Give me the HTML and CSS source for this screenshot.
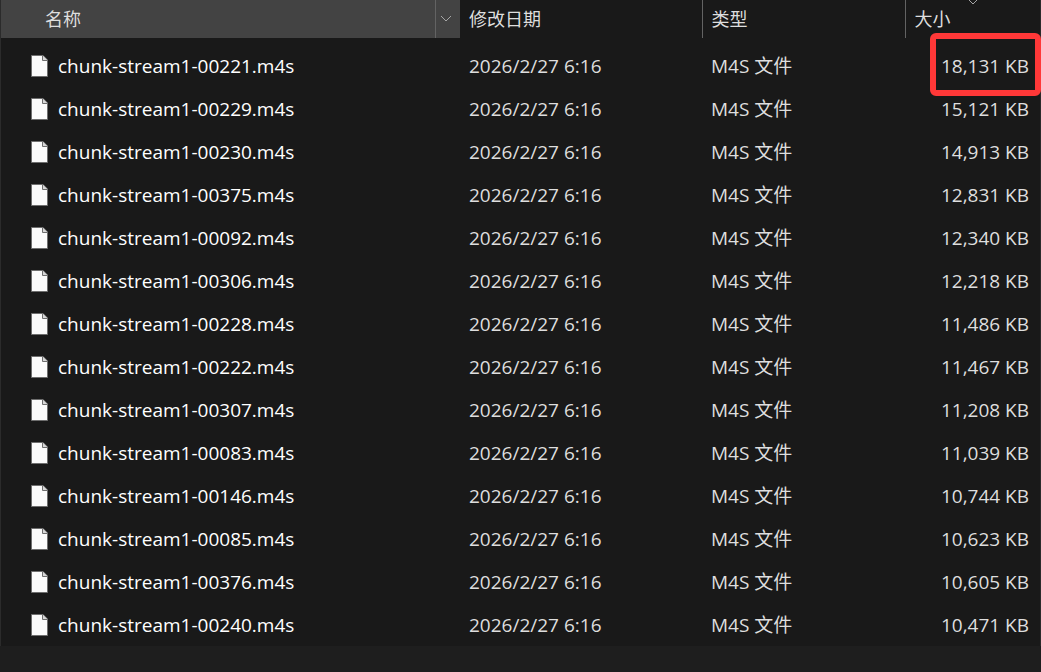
FILE: index.html
```html
<!DOCTYPE html>
<html lang="zh-CN">
<head>
    <meta charset="UTF-8">
    <meta name="viewport" content="width=device-width, initial-scale=1.0">
    <title>chunk-stream1</title>
    <link rel="stylesheet" href="styles.css">
</head>
<body>
    <!-- Shared file icon -->
    <svg class="symbols" aria-hidden="true">
        <symbol id="file-icon" viewBox="0 0 17 22">
            <path d="M0.5 0.5H12L16.5 5V21.5H0.5Z" fill="#fbfbfb" stroke="#6e6e6e"/>
            <path d="M11.5 0.5V5.5H16.5" fill="#d8d8d8" stroke="#6e6e6e"/>
        </symbol>
    </svg>

    <main class="file-list">
        <table class="file-table">
            <colgroup>
                <col class="col-name">
                <col class="col-date">
                <col class="col-type">
                <col class="col-size">
            </colgroup>
            <thead>
                <tr>
                    <th class="name-head" scope="col">
                        <div class="head-cell">
                            <button class="sort-button" type="button">名称</button>
                            <button class="filter-button" type="button" aria-label="筛选">
                                <svg width="12" height="8" viewBox="0 0 12 8"><path d="M1 1L6 6L11 1" fill="none" stroke="#a6a6a6"/></svg>
                            </button>
                        </div>
                    </th>
                    <th scope="col"><button class="sort-button" type="button">修改日期</button></th>
                    <th class="divided" scope="col"><button class="sort-button" type="button">类型</button></th>
                    <th class="divided sorted" scope="col" aria-sort="descending">
                        <button class="sort-button" type="button">大小</button>
                        <svg class="sort-arrow" width="12" height="6" viewBox="0 0 12 6"><path d="M1.5 -0.5L6 4L10.5 -0.5" fill="none" stroke="#a6a6a6"/></svg>
                    </th>
                </tr>
            </thead>
            <tbody id="files"></tbody>
        </table>
    </main>

    <script src="script.js"></script>
</body>
</html>
```
FILE: styles.css
```css
/* Basic reset */
* {
    margin: 0;
    padding: 0;
    box-sizing: border-box;
}

body {
    background-color: #1e1e1e;
    color: #dedede;
    font-family: "Open Sans", "Noto Sans CJK SC", sans-serif;
    font-size: 18px;
    line-height: 24px;
}

.symbols {
    display: none;
}

.file-list {
    background-color: #191919;
    border-left: 1px solid #2b2b2b;
    border-right: 1px solid #2b2b2b;
}

.file-table {
    width: 100%;
    table-layout: fixed;
    border-collapse: collapse;
}

.col-name {
    width: 459px;
}

.col-date {
    width: 242px;
}

.col-type {
    width: 203px;
}

/* Column headers */
th {
    height: 38px;
    font-weight: normal;
    text-align: left;
}

.name-head {
    background-color: #434343;
}

.divided {
    border-left: 1px solid #636363;
}

.head-cell {
    display: flex;
    height: 38px;
}

.sort-button {
    width: 100%;
    height: 38px;
    padding-left: 9px;
    border: none;
    background: none;
    color: inherit;
    font: inherit;
    text-align: left;
}

.name-head .sort-button {
    flex: 1;
    padding-left: 44px;
}

.filter-button {
    display: flex;
    align-items: center;
    width: 25px;
    padding-left: 4px;
    border: none;
    border-left: 1px solid #636363;
    background: none;
}

.sorted {
    position: relative;
}

.sort-arrow {
    position: absolute;
    top: 0;
    left: 50%;
    transform: translateX(-50%);
}

/* File rows */
tbody::before {
    content: "";
    display: block;
    height: 6px;
}

td {
    height: 43px;
    padding-left: 9px;
    font-size: 19px;
    vertical-align: middle;
    white-space: nowrap;
}

.file-name {
    display: flex;
    align-items: center;
    gap: 10px;
    padding-left: 21px;
    color: #ffffff;
}

.file-icon {
    width: 17px;
    height: 22px;
}

.size {
    position: relative;
    padding-right: 11px;
    text-align: right;
}

/* Red frame around the largest file */
.highlight {
    position: absolute;
    top: -11px;
    right: -1px;
    width: 111px;
    height: 63px;
    border: 6px solid #ff3838;
    border-radius: 6px;
}
```
FILE: script.js
```js
var files = [
    ["00221", "18,131"],
    ["00229", "15,121"],
    ["00230", "14,913"],
    ["00375", "12,831"],
    ["00092", "12,340"],
    ["00306", "12,218"],
    ["00228", "11,486"],
    ["00222", "11,467"],
    ["00307", "11,208"],
    ["00083", "11,039"],
    ["00146", "10,744"],
    ["00085", "10,623"],
    ["00376", "10,605"],
    ["00240", "10,471"]
];

// Build one row per file, the first one gets the frame
document.getElementById("files").innerHTML = files.map(function (file, i) {
    return '<tr>' +
        '<td><div class="file-name"><svg class="file-icon"><use href="#file-icon"/></svg>' +
        '<span>chunk-stream1-' + file[0] + '.m4s</span></div></td>' +
        '<td>2026/2/27 6:16</td>' +
        '<td>M4S 文件</td>' +
        '<td class="size">' + file[1] + ' KB' + (i === 0 ? '<span class="highlight"></span>' : '') + '</td>' +
        '</tr>';
}).join("");
```
